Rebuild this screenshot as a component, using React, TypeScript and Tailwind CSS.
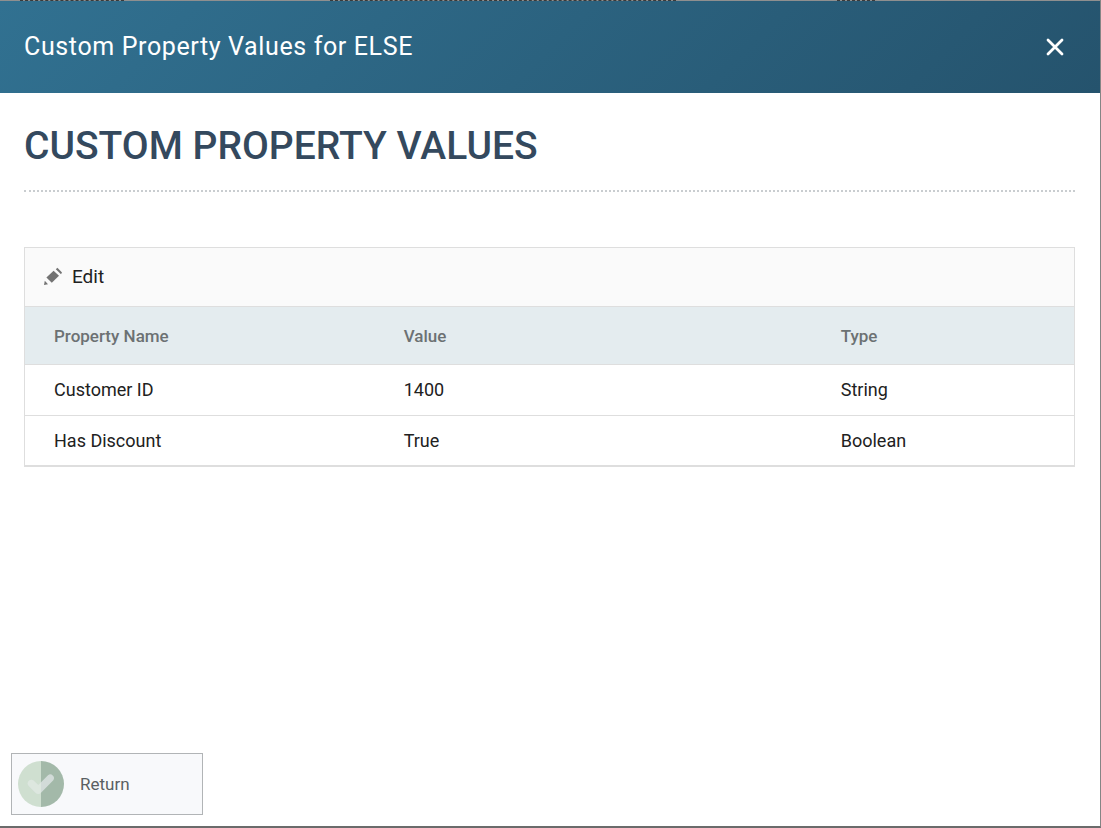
import React from "react";

type Property = { name: string; value: string; type: string };

const properties: Property[] = [
  { name: "Customer ID", value: "1400", type: "String" },
  { name: "Has Discount", value: "True", type: "Boolean" },
];

function CloseIcon() {
  return (
    <svg width="18" height="18" viewBox="0 0 18 18" fill="none" stroke="#fff" strokeWidth="2.8" strokeLinecap="round" aria-hidden="true">
      <path d="M2 2L16 16M16 2L2 16" />
    </svg>
  );
}

function PencilIcon() {
  return (
    <svg width="20" height="20" viewBox="0 0 20 20" fill="#737373" aria-hidden="true">
      <path d="M3.4 10.6L10.6 3.8L16 8.8L8.8 15.8Z" />
      <path d="M12.8 2.2L14.4 0.8L19 5.4L18 7.2Z" />
      <path d="M1.8 13.8L5 17.2L1 18Z" />
    </svg>
  );
}

function CheckIcon() {
  return (
    <svg width="46" height="46" viewBox="0 0 46 46" aria-hidden="true">
      <path d="M23 0A23 23 0 0 0 23 46Z" fill="#cfdfd0" />
      <path d="M23 0A23 23 0 0 1 23 46Z" fill="#a3b9a9" />
      <path d="M9.6 22.6A3.8 3.8 0 0 1 15.2 19.2L20.3 24L30 14.2A3.7 3.7 0 0 1 35.3 19.2L23 31.8V31.8Q20.3 34.3 17.5 31.8L10.8 25Q9.6 23.8 9.6 22.6Z" fill="#d2dbd8" />
      <path d="M9.6 22.6A3.8 3.8 0 0 1 15.2 19.2L20.3 24L23 21.3V31.8Q20.3 34.3 17.5 31.8L10.8 25Q9.6 23.8 9.6 22.6Z" fill="#dde7df" />
    </svg>
  );
}

/* Sliver of the dimmed page that shows above the dialog. */
function Backdrop() {
  return (
    <div aria-hidden="true" className="grid h-px shrink-0 grid-cols-[310px_507px_1fr] bg-[#8f8f8f] pl-5">
      <span className="h-px w-[104px] border-t border-dashed border-[#3a3a3a]" />
      <span className="h-px w-[346px] border-t border-dashed border-[#3a3a3a]" />
      <span className="h-px w-[38px] border-t border-dashed border-[#3a3a3a]" />
    </div>
  );
}

export default function App() {
  return (
    <div className="flex min-h-screen flex-col border-r border-b-2 border-r-[#858585] border-b-[#6b6b6b] bg-white font-['Roboto',sans-serif] text-[#212121]">
      <Backdrop />
      <header className="flex h-[92px] shrink-0 items-center justify-between bg-[linear-gradient(135deg,#317191,#25536d)] pr-[35px] pl-6 text-white">
        <h2 className="text-[25px] leading-8 tracking-wide">Custom Property Values for ELSE</h2>
        <button type="button" aria-label="Close" className="flex size-5 items-center justify-center">
          <CloseIcon />
        </button>
      </header>

      <main className="flex-1 pr-[25px] pl-6">
        <h1 className="border-b-2 border-dotted border-[#c9cdd0] pt-7 pb-[19px] text-[39px] leading-[50px] font-medium text-[#34495e]">
          CUSTOM PROPERTY VALUES
        </h1>

        <section className="mt-[55px] border border-b-2 border-[#dedede]">
          <div className="flex h-[59px] items-center border-b border-[#dedede] bg-[#fafafa] px-[18px]">
            <button type="button" className="flex items-center gap-[9px] text-[19px] leading-6">
              <PencilIcon />
              Edit
            </button>
          </div>
          <table className="w-full table-fixed border-separate border-spacing-0 text-left text-[18px] leading-6">
            <thead>
              <tr className="h-[58px] bg-[#e4ecef] text-[17px] text-[#6c7173]">
                <th scope="col" className="w-4/12 border-b border-[#dedede] px-[29px] font-medium">Property Name</th>
                <th scope="col" className="w-5/12 border-b border-[#dedede] px-[29px] font-medium">Value</th>
                <th scope="col" className="w-3/12 border-b border-[#dedede] px-[29px] font-medium">Type</th>
              </tr>
            </thead>
            <tbody>
              {properties.map((p) => (
                <tr key={p.name} className="group h-[51px] last:h-[49px]">
                  <td className="border-b border-[#dedede] px-[29px] group-last:border-b-0">{p.name}</td>
                  <td className="border-b border-[#dedede] px-[29px] group-last:border-b-0">{p.value}</td>
                  <td className="border-b border-[#dedede] px-[29px] group-last:border-b-0">{p.type}</td>
                </tr>
              ))}
            </tbody>
          </table>
        </section>
      </main>

      <footer className="px-[11px] pb-[11px]">
        <button type="button" className="flex h-[62px] w-[192px] items-center gap-4 border border-[#b1b4b6] bg-[#f8f9fb] px-1.5 text-[17px] leading-6 text-[#5a5f62]">
          <CheckIcon />
          Return
        </button>
      </footer>
    </div>
  );
}
